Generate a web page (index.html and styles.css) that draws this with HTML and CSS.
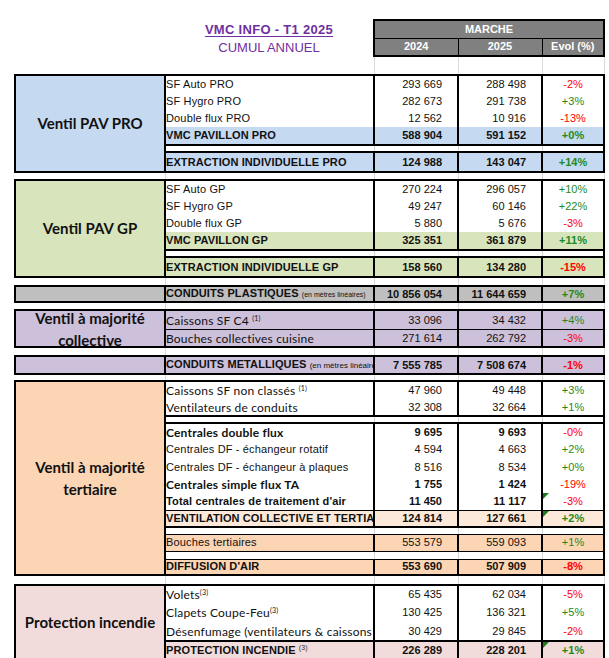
FILE: index.html
```html
<!DOCTYPE html>
<html lang="fr">
<head>
<meta charset="utf-8">
<title>VMC INFO - T1 2025</title>
<link rel="stylesheet" href="styles.css">
</head>
<body>
<table class="sheet">
<colgroup><col class="ca"><col class="cb"><col class="cc"><col class="cd"><col class="ce"></colgroup>
<thead>
<tr class="h18"><td></td><td class="title"><span>VMC INFO - T1 2025</span></td><th colspan="3" class="mk">MARCHE</th></tr>
<tr class="h18"><td></td><td class="sub">CUMUL ANNUEL</td><th class="yr yl">2024</th><th class="yr">2025</th><th class="yr yrr">Evol (%)</th></tr>
</thead>
<tbody class="gap gap0"><tr class="h19"><td></td><td></td><td></td><td></td><td></td></tr></tbody>

<tbody class="blk">
<tr class="h18"><th rowspan="6" class="cat f-pro">Ventil PAV PRO</th><td class="lb">SF Auto PRO</td><td class="n">293 669</td><td class="n">288 498</td><td class="ev neg">-2%</td></tr>
<tr class="h17"><td class="lb">SF Hygro PRO</td><td class="n">282 673</td><td class="n">291 738</td><td class="ev pos">+3%</td></tr>
<tr class="h17"><td class="lb">Double flux PRO</td><td class="n">12 562</td><td class="n">10 916</td><td class="ev neg">-13%</td></tr>
<tr class="h18 b f-pro"><td class="lb caps">VMC PAVILLON PRO</td><td class="n">588 904</td><td class="n">591 152</td><td class="ev pos">+0%</td></tr>
<tr class="h7 sp lt2"><td></td><td></td><td></td><td class="spr"></td></tr>
<tr class="h20 b f-pro lt2"><td class="lb caps">EXTRACTION INDIVIDUELLE PRO</td><td class="n">124 988</td><td class="n">143 047</td><td class="ev pos">+14%</td></tr>
</tbody>
<tbody class="gap"><tr class="h8"><td></td><td></td><td></td><td></td><td></td></tr></tbody>

<tbody class="blk">
<tr class="h18"><th rowspan="6" class="cat f-gp">Ventil PAV GP</th><td class="lb">SF Auto GP</td><td class="n">270 224</td><td class="n">296 057</td><td class="ev pos">+10%</td></tr>
<tr class="h17"><td class="lb">SF Hygro GP</td><td class="n">49 247</td><td class="n">60 146</td><td class="ev pos">+22%</td></tr>
<tr class="h17"><td class="lb">Double flux GP</td><td class="n">5 880</td><td class="n">5 676</td><td class="ev neg">-3%</td></tr>
<tr class="h18 b f-gp"><td class="lb caps">VMC PAVILLON GP</td><td class="n">325 351</td><td class="n">361 879</td><td class="ev pos">+11%</td></tr>
<tr class="h7 sp lt2"><td></td><td></td><td></td><td class="spr"></td></tr>
<tr class="h20 b f-gp lt2"><td class="lb caps">EXTRACTION INDIVIDUELLE GP</td><td class="n">158 560</td><td class="n">134 280</td><td class="ev neg">-15%</td></tr>
</tbody>
<tbody class="gap"><tr class="h9"><td></td><td></td><td></td><td></td><td></td></tr></tbody>

<tbody class="blk">
<tr class="h16 b f-gray"><th class="cat f-gray"></th><td class="lb caps">CONDUITS PLASTIQUES <small class="unit">(en mètres linéaires)</small></td><td class="n">10 856 054</td><td class="n">11 644 659</td><td class="ev pos">+7%</td></tr>
</tbody>
<tbody class="gap"><tr class="h8"><td></td><td></td><td></td><td></td><td></td></tr></tbody>

<tbody class="blk">
<tr class="h19 f-col"><th rowspan="2" class="cat f-col"><div class="clip"><span class="two">Ventil à majorité collective</span></div></th><td class="lb cal">Caissons SF C4 <sup>(1)</sup></td><td class="n">33 096</td><td class="n">34 432</td><td class="ev pos">+4%</td></tr>
<tr class="h17 f-col lt1"><td class="lb cal">Bouches collectives cuisine</td><td class="n">271 614</td><td class="n">262 792</td><td class="ev neg">-3%</td></tr>
</tbody>
<tbody class="gap"><tr class="h9"><td></td><td></td><td></td><td></td><td></td></tr></tbody>

<tbody class="blk">
<tr class="h18 b f-col"><th class="cat f-col"></th><td class="lb caps">CONDUITS METALLIQUES <small class="unit unit-l">(en mètres linéaires)</small></td><td class="n">7 555 785</td><td class="n">7 508 674</td><td class="ev neg">-1%</td></tr>
</tbody>
<tbody class="gap"><tr class="h7"><td></td><td></td><td></td><td></td><td></td></tr></tbody>

<tbody class="blk">
<tr class="h18"><th rowspan="13" class="cat f-ter"><span class="two">Ventil à majorité tertiaire</span></th><td class="lb cal">Caissons SF non classés <sup>(1)</sup></td><td class="n">47 960</td><td class="n">49 448</td><td class="ev pos">+3%</td></tr>
<tr class="h17"><td class="lb cal">Ventilateurs de conduits</td><td class="n">32 308</td><td class="n">32 664</td><td class="ev pos">+1%</td></tr>
<tr class="h7 sp lt2"><td></td><td></td><td></td><td class="spr"></td></tr>
<tr class="h18 lt2"><td class="lb cal bd">Centrales double flux</td><td class="n bd">9 695</td><td class="n bd">9 693</td><td class="ev neg">-0%</td></tr>
<tr class="h17"><td class="lb">Centrales DF - échangeur rotatif</td><td class="n">4 594</td><td class="n">4 663</td><td class="ev pos">+2%</td></tr>
<tr class="h18"><td class="lb">Centrales DF - échangeur à plaques</td><td class="n">8 516</td><td class="n">8 534</td><td class="ev pos">+0%</td></tr>
<tr class="h17"><td class="lb cal bd">Centrales simple flux TA</td><td class="n bd">1 755</td><td class="n bd">1 424</td><td class="ev neg">-19%</td></tr>
<tr class="h17"><td class="lb bd">Total centrales de traitement d'air</td><td class="n bd">11 450</td><td class="n bd">11 117</td><td class="ev neg tri">-3%</td></tr>
<tr class="h17 b f-ter-l lt1"><td class="lb caps">VENTILATION COLLECTIVE ET TERTIAIRE</td><td class="n">124 814</td><td class="n">127 661</td><td class="ev pos tri">+2%</td></tr>
<tr class="h7 sp lt2"><td></td><td></td><td></td><td class="spr"></td></tr>
<tr class="h17 f-ter lt1"><td class="lb">Bouches tertiaires</td><td class="n">553 579</td><td class="n">559 093</td><td class="ev pos">+1%</td></tr>
<tr class="h8 sp lt1"><td></td><td></td><td></td><td class="spr"></td></tr>
<tr class="h16 b f-ter lt1"><td class="lb caps">DIFFUSION D'AIR</td><td class="n">553 690</td><td class="n">507 909</td><td class="ev neg">-8%</td></tr>
</tbody>
<tbody class="gap"><tr class="h10"><td></td><td></td><td></td><td></td><td></td></tr></tbody>

<tbody class="blk">
<tr class="h18"><th rowspan="4" class="cat f-inc">Protection incendie</th><td class="lb cal">Volets<sup>(3)</sup></td><td class="n">65 435</td><td class="n">62 034</td><td class="ev neg">-5%</td></tr>
<tr class="h19"><td class="lb cal">Clapets Coupe-Feu<sup>(3)</sup></td><td class="n">130 425</td><td class="n">136 321</td><td class="ev pos">+5%</td></tr>
<tr class="h19"><td class="lb cal">Désenfumage (ventilateurs &amp; caissons</td><td class="n">30 429</td><td class="n">29 845</td><td class="ev neg">-2%</td></tr>
<tr class="h18 b f-inc lt2"><td class="lb caps">PROTECTION INCENDIE <sup class="sup-c">(3)</sup></td><td class="n">226 289</td><td class="n">228 201</td><td class="ev pos tri">+1%</td></tr>
</tbody>
</table>
</body>
</html>
```

FILE: styles.css
```css
body {
  margin: 0;
  background: #ffffff;
  font-family: "Liberation Sans", Arial, sans-serif;
  color: #111111;
}

.sheet {
  margin: 19px 0 0 14px;
  border-collapse: collapse;
  table-layout: fixed;
  width: 589px;
  font-size: 11px;
}

.sheet td,
.sheet th {
  padding: 0;
  line-height: 13px;
  white-space: nowrap;
  overflow: hidden;
  font-weight: normal;
}

col.ca { width: 150px; }
col.cb { width: 209px; }
col.cc { width: 84px; }
col.cd { width: 84px; }
col.ce { width: 62px; }

.h7 { height: 7px; }
.h8 { height: 8px; }
.h9 { height: 9px; }
.h10 { height: 10px; }
.h16 { height: 16px; }
.h17 { height: 17px; }
.h18 { height: 18px; }
.h19 { height: 19px; }
.h20 { height: 20px; }

/* header */
.sheet .title {
  text-align: center;
  vertical-align: middle;
  color: #7030a0;
  font-weight: bold;
  font-size: 13px;
  letter-spacing: 0.3px;
}
.title span {
  text-decoration: underline;
  text-underline-offset: 2px;
}
.sheet .sub {
  text-align: center;
  vertical-align: middle;
  color: #7030a0;
  font-size: 13px;
}
.sheet .mk,
.sheet .yr {
  background: #808080;
  color: #ffffff;
  font-weight: bold;
  text-align: center;
  vertical-align: middle;
  border: 1px solid #000000;
}
.sheet .mk {
  border-top: 2px solid #000000;
  border-left: 2px solid #000000;
  border-right: 2px solid #000000;
}
.sheet .yr { border-bottom: 2px solid #000000; }
.sheet .yl { border-left: 2px solid #000000; }
.sheet .yrr { border-right: 2px solid #000000; }

/* gaps with faint grid lines */
.gap td { border-left: 1px solid #dadada; }
.gap td:first-child { border-left: none; }
.gap td:last-child { border-right: 1px solid #dadada; }
.gap0 td:nth-child(2) { border-left: none; }

/* blocks */
.blk { border: 2px solid #000000; }

.sheet .cat {
  border-right: 2px solid #000000;
  font-family: Lato, "Open Sans", sans-serif;
  font-weight: bold;
  font-size: 15px;
  text-align: center;
  vertical-align: middle;
  white-space: normal;
  color: #111111;
}
.clip {
  height: 35px;
  overflow: hidden;
  display: flex;
  align-items: center;
  justify-content: center;
}
.two {
  display: block;
  width: 130px;
  margin: 0 auto;
  line-height: 22px;
  white-space: normal;
}

.lb { padding-left: 3px; letter-spacing: 0.15px; }
.sheet .caps { letter-spacing: 0.1px; }
.cal {
  font-family: Lato, "Open Sans", sans-serif;
  font-size: 12px;
  letter-spacing: 0.2px;
}
.sheet .bd { font-weight: bold; }
.sheet .b td { font-weight: bold; }

td.n,
td.ev { border-left: 2px solid #000000; }
td.n {
  text-align: right;
  padding-right: 15px;
}
td.ev { text-align: center; }

.neg { color: #ff0000; }
.pos { color: #1e8a1e; }

tr.lt2 td { border-top: 2px solid #000000; }
tr.lt1 td { border-top: 1px solid #000000; }
.sheet tr.sp td { border-left: 1px solid #d4d4d4; }
.sheet tr.sp td.spr { border-right: 2px solid #000000; }

sup {
  font-size: 7px;
  line-height: 0;
  vertical-align: 4px;
  font-weight: normal;
}
.sup-c { color: #333333; }

.unit {
  font-size: 7px;
  font-weight: normal;
  letter-spacing: 0;
}
.unit-l { font-size: 8px; }

/* fills */
.f-pro, .f-pro td { background: #c5d9f1; }
.f-gp, .f-gp td { background: #d8e4bc; }
.f-gray, .f-gray td { background: #bfbfbf; }
.f-col, .f-col td { background: #ccc0da; }
.f-ter, .f-ter td { background: #fcd5b4; }
.f-ter-l td { background: #fde9d9; }
.f-inc, .f-inc td { background: #f2dcdb; }

/* excel error indicator */
.tri { position: relative; }
.tri::before {
  content: "";
  position: absolute;
  left: 0;
  top: 0;
  border-top: 6px solid #1e7a1e;
  border-right: 6px solid transparent;
}
```
